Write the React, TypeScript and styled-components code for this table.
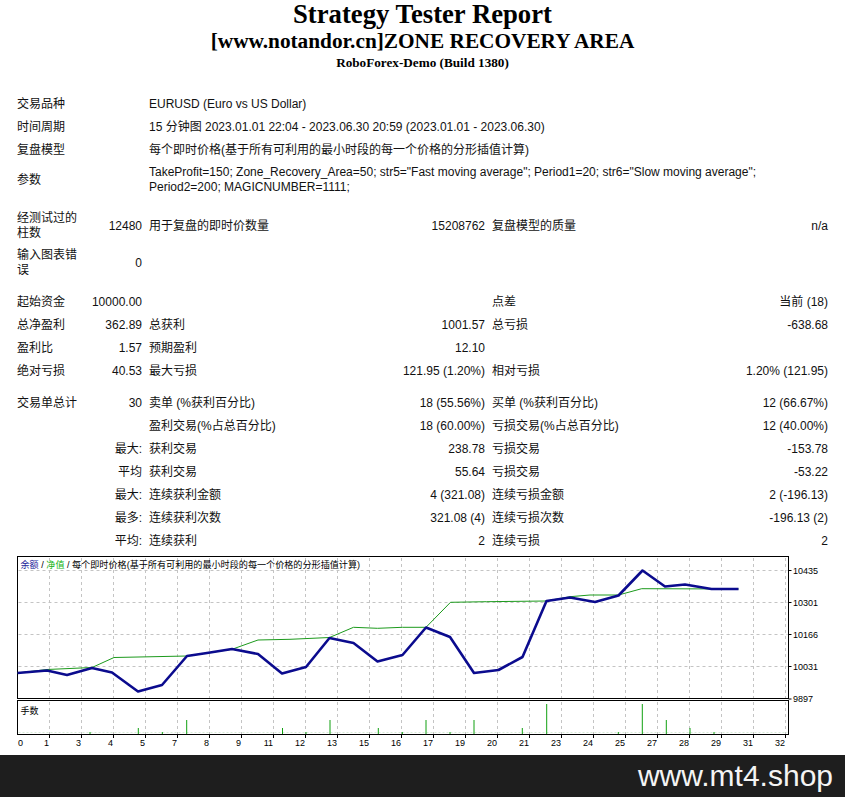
import React from "react";
import styled, { createGlobalStyle } from "styled-components";

const GlobalStyle = createGlobalStyle`
  html, body { margin: 0; padding: 0; background: #fff; }
  body {
    font-family: "Liberation Sans", "Noto Sans CJK SC", sans-serif;
    color: #111;
  }
`;

const Page = styled.div`
  width: 845px;
  height: 797px;
  display: flex;
  flex-direction: column;
  overflow: hidden;
  background: #fff;
`;

const Header = styled.header`
  display: flex;
  flex-direction: column;
  align-items: center;
  font-family: "Liberation Serif", "Noto Sans CJK SC", serif;
  font-weight: bold;
  color: #000;
`;

const Title = styled.div`
  font-size: 26.7px;
  line-height: 29px;
`;

const Subtitle = styled.div`
  font-size: 21.3px;
  line-height: 22px;
  margin-top: 1px;
`;

const Server = styled.div`
  font-size: 13.2px;
  line-height: 16px;
  margin-top: 2.5px;
`;

const Table = styled.div`
  display: flex;
  flex-direction: column;
  gap: 1px;
  margin: 22.5px 0 0 14px;
  width: 817px;
  font-size: 12px;
`;

const Row = styled.div`
  display: grid;
  grid-template-columns: 68px 62px 200px 141px 200px 141px;
  column-gap: 1px;
`;

const Cell = styled.div<{ $span?: number; $right?: boolean }>`
  grid-column: span ${(p) => p.$span ?? 1};
  box-sizing: border-box;
  min-height: 22px;
  padding: 3px;
  line-height: 15px;
  display: flex;
  align-items: center;
  justify-content: ${(p) => (p.$right ? "flex-end" : "flex-start")};
  text-align: ${(p) => (p.$right ? "right" : "left")};
`;

const Spacer = styled.div`
  height: 8px;
`;

const ChartWrap = styled.div`
  height: 203px;
  display: flex;
`;

const Footer = styled.footer`
  height: 42px;
  flex: none;
  background: #1e1e1e;
  display: flex;
  align-items: center;
  justify-content: flex-end;
  padding-right: 12px;
  font-family: "Liberation Sans", sans-serif;
  font-size: 30px;
  color: #f4f4f4;
`;

const blue: [number, number][] = [
  [17.5, 673], [47, 670.5], [67, 675], [92, 668], [112, 672.5], [138, 691.5],
  [162, 685], [187, 656], [207, 653], [232, 649], [258, 654], [282, 673.5],
  [306, 667], [329.5, 638], [353.5, 643], [377.5, 661.5], [402.5, 655],
  [426, 627.5], [450, 637], [474, 673], [498.5, 670], [522.5, 657],
  [546.5, 601], [570, 597.5], [595, 602], [618.5, 595.5], [642.5, 570.5],
  [665, 586.5], [685, 584.5], [711.5, 589], [738.5, 589],
];

const green: [number, number][] = [
  [17.5, 673], [47, 669.5], [92, 667.5], [114, 657.5], [187, 656], [207, 653],
  [232, 649.3], [258, 640], [290, 639.3], [329.5, 637.5], [353.5, 627.3],
  [377.5, 628.3], [402.5, 627.3], [426, 627.3], [450.5, 602.3], [486.7, 601.7],
  [546.5, 601], [570, 596.7], [590, 595], [618.5, 595], [641.7, 588.7],
  [738.5, 589],
];

const bars: [number, number][] = [
  [90, 732], [138.3, 728], [162.3, 732], [186.7, 720], [282.5, 728], [306, 732],
  [330, 720], [378.3, 728], [402.3, 732], [426, 720], [450, 732], [474, 720],
  [522.3, 728], [546.7, 704], [618.3, 732], [642.3, 704], [666.3, 720],
  [690, 728], [714, 732],
];

const xLabels = ["0", "1", "3", "4", "5", "7", "8", "9", "11", "12", "13", "15", "16", "17", "19", "20", "21", "23", "24", "25", "27", "28", "29", "31", "32"];
const yLabels: [string, number][] = [
  ["10435", 570.5], ["10301", 602.5], ["10166", 634.5], ["10031", 666.5], ["9897", 699],
];

const pts = (a: [number, number][]) => a.map(([x, y]) => `${x},${y}`).join(" ");

const L = 17.5;
const R = 788.5;
const gx = (k: number) => 17.5 + 32 * k;

function Chart() {
  return (
    <svg width="845" height="203" viewBox="0 552 845 203" fontFamily='"Liberation Sans", "Noto Sans CJK SC", sans-serif'>
      <rect x={L} y={556.5} width={R - L} height={142} fill="#fff" stroke="#000" strokeWidth="1" />
      <rect x={L} y={700.5} width={R - L} height={34} fill="#fff" stroke="#000" strokeWidth="1" />
      {Array.from({ length: 24 }, (_, i) => i + 1).map((k) => (
        <g key={k}>
          <line x1={gx(k)} y1={558} x2={gx(k)} y2={698} stroke="#c4c4c4" strokeDasharray="3 3" />
          <line x1={gx(k)} y1={702} x2={gx(k)} y2={734} stroke="#c4c4c4" strokeDasharray="3 3" />
          <line x1={gx(k)} y1={735} x2={gx(k)} y2={738} stroke="#000" />
        </g>
      ))}
      {yLabels.slice(0, 4).map(([, y]) => (
        <line key={y} x1={L + 1} y1={y} x2={R - 1} y2={y} stroke="#c4c4c4" strokeDasharray="3 3" />
      ))}
      <line x1={L + 1} y1={732.5} x2={R - 1} y2={732.5} stroke="#d8ecd8" strokeDasharray="2 2" />
      {yLabels.map(([t, y]) => (
        <g key={t}>
          <line x1={R} y1={y} x2={R + 3} y2={y} stroke="#000" />
          <text x={793} y={y + 3.3} fontSize="9" fill="#000">{t}</text>
        </g>
      ))}
      {xLabels.map((t, k) =>
        k === 0 ? (
          <text key={t} x={18} y={746} fontSize="9" fill="#000">{t}</text>
        ) : (
          <text key={t} x={gx(k) - 0.5} y={746} fontSize="9" fill="#000" textAnchor="end">{t}</text>
        )
      )}
      <text x={20.5} y={568} fontSize="9.1" fill="#000">
        <tspan fill="#1b1b9a">余额</tspan>
        <tspan> / </tspan>
        <tspan fill="#12b312">净值</tspan>
        <tspan> / 每个即时价格(基于所有可利用的最小时段的每一个价格的分形插值计算)</tspan>
      </text>
      <text x={20.5} y={714} fontSize="9" fill="#000">手数</text>
      {bars.map(([x, y]) => (
        <line key={x} x1={x} y1={734} x2={x} y2={y} stroke="#10a010" strokeWidth="1" />
      ))}
      <polyline points={pts(green)} fill="none" stroke="#1c9a1c" strokeWidth="1" />
      <polyline points={pts(blue)} fill="none" stroke="#0b0b8e" strokeWidth="2.6" strokeLinejoin="round" />
    </svg>
  );
}

export default function App() {
  return (
    <Page>
      <GlobalStyle />
      <Header>
        <Title>Strategy Tester Report</Title>
        <Subtitle>[www.notandor.cn]ZONE RECOVERY AREA</Subtitle>
        <Server>RoboForex-Demo (Build 1380)</Server>
      </Header>
      <Table>
        <Row>
          <Cell $span={2}>交易品种</Cell>
          <Cell $span={4}>EURUSD (Euro vs US Dollar)</Cell>
        </Row>
        <Row>
          <Cell $span={2}>时间周期</Cell>
          <Cell $span={4}>15 分钟图 2023.01.01 22:04 - 2023.06.30 20:59 (2023.01.01 - 2023.06.30)</Cell>
        </Row>
        <Row>
          <Cell $span={2}>复盘模型</Cell>
          <Cell $span={4}>每个即时价格(基于所有可利用的最小时段的每一个价格的分形插值计算)</Cell>
        </Row>
        <Row>
          <Cell $span={2}>参数</Cell>
          <Cell $span={4}>
            TakeProfit=150; Zone_Recovery_Area=50; str5="Fast moving average"; Period1=20; str6="Slow moving average"; Period2=200; MAGICNUMBER=1111;
          </Cell>
        </Row>
        <Spacer />
        <Row>
          <Cell>经测试过的柱数</Cell>
          <Cell $right>12480</Cell>
          <Cell>用于复盘的即时价数量</Cell>
          <Cell $right>15208762</Cell>
          <Cell>复盘模型的质量</Cell>
          <Cell $right>n/a</Cell>
        </Row>
        <Row>
          <Cell>输入图表错误</Cell>
          <Cell $right>0</Cell>
          <Cell $span={4} />
        </Row>
        <Spacer />
        <Row>
          <Cell>起始资金</Cell>
          <Cell $right>10000.00</Cell>
          <Cell />
          <Cell />
          <Cell>点差</Cell>
          <Cell $right>当前 (18)</Cell>
        </Row>
        <Row>
          <Cell>总净盈利</Cell>
          <Cell $right>362.89</Cell>
          <Cell>总获利</Cell>
          <Cell $right>1001.57</Cell>
          <Cell>总亏损</Cell>
          <Cell $right>-638.68</Cell>
        </Row>
        <Row>
          <Cell>盈利比</Cell>
          <Cell $right>1.57</Cell>
          <Cell>预期盈利</Cell>
          <Cell $right>12.10</Cell>
          <Cell />
          <Cell />
        </Row>
        <Row>
          <Cell>绝对亏损</Cell>
          <Cell $right>40.53</Cell>
          <Cell>最大亏损</Cell>
          <Cell $right>121.95 (1.20%)</Cell>
          <Cell>相对亏损</Cell>
          <Cell $right>1.20% (121.95)</Cell>
        </Row>
        <Spacer />
        <Row>
          <Cell>交易单总计</Cell>
          <Cell $right>30</Cell>
          <Cell>卖单 (%获利百分比)</Cell>
          <Cell $right>18 (55.56%)</Cell>
          <Cell>买单 (%获利百分比)</Cell>
          <Cell $right>12 (66.67%)</Cell>
        </Row>
        <Row>
          <Cell />
          <Cell />
          <Cell>盈利交易(%占总百分比)</Cell>
          <Cell $right>18 (60.00%)</Cell>
          <Cell>亏损交易(%占总百分比)</Cell>
          <Cell $right>12 (40.00%)</Cell>
        </Row>
        <Row>
          <Cell />
          <Cell $right>最大:</Cell>
          <Cell>获利交易</Cell>
          <Cell $right>238.78</Cell>
          <Cell>亏损交易</Cell>
          <Cell $right>-153.78</Cell>
        </Row>
        <Row>
          <Cell />
          <Cell $right>平均</Cell>
          <Cell>获利交易</Cell>
          <Cell $right>55.64</Cell>
          <Cell>亏损交易</Cell>
          <Cell $right>-53.22</Cell>
        </Row>
        <Row>
          <Cell />
          <Cell $right>最大:</Cell>
          <Cell>连续获利金额</Cell>
          <Cell $right>4 (321.08)</Cell>
          <Cell>连续亏损金额</Cell>
          <Cell $right>2 (-196.13)</Cell>
        </Row>
        <Row>
          <Cell />
          <Cell $right>最多:</Cell>
          <Cell>连续获利次数</Cell>
          <Cell $right>321.08 (4)</Cell>
          <Cell>连续亏损次数</Cell>
          <Cell $right>-196.13 (2)</Cell>
        </Row>
        <Row>
          <Cell />
          <Cell $right>平均:</Cell>
          <Cell>连续获利</Cell>
          <Cell $right>2</Cell>
          <Cell>连续亏损</Cell>
          <Cell $right>2</Cell>
        </Row>
      </Table>
      <ChartWrap>
        <Chart />
      </ChartWrap>
      <Footer>www.mt4.shop</Footer>
    </Page>
  );
}
